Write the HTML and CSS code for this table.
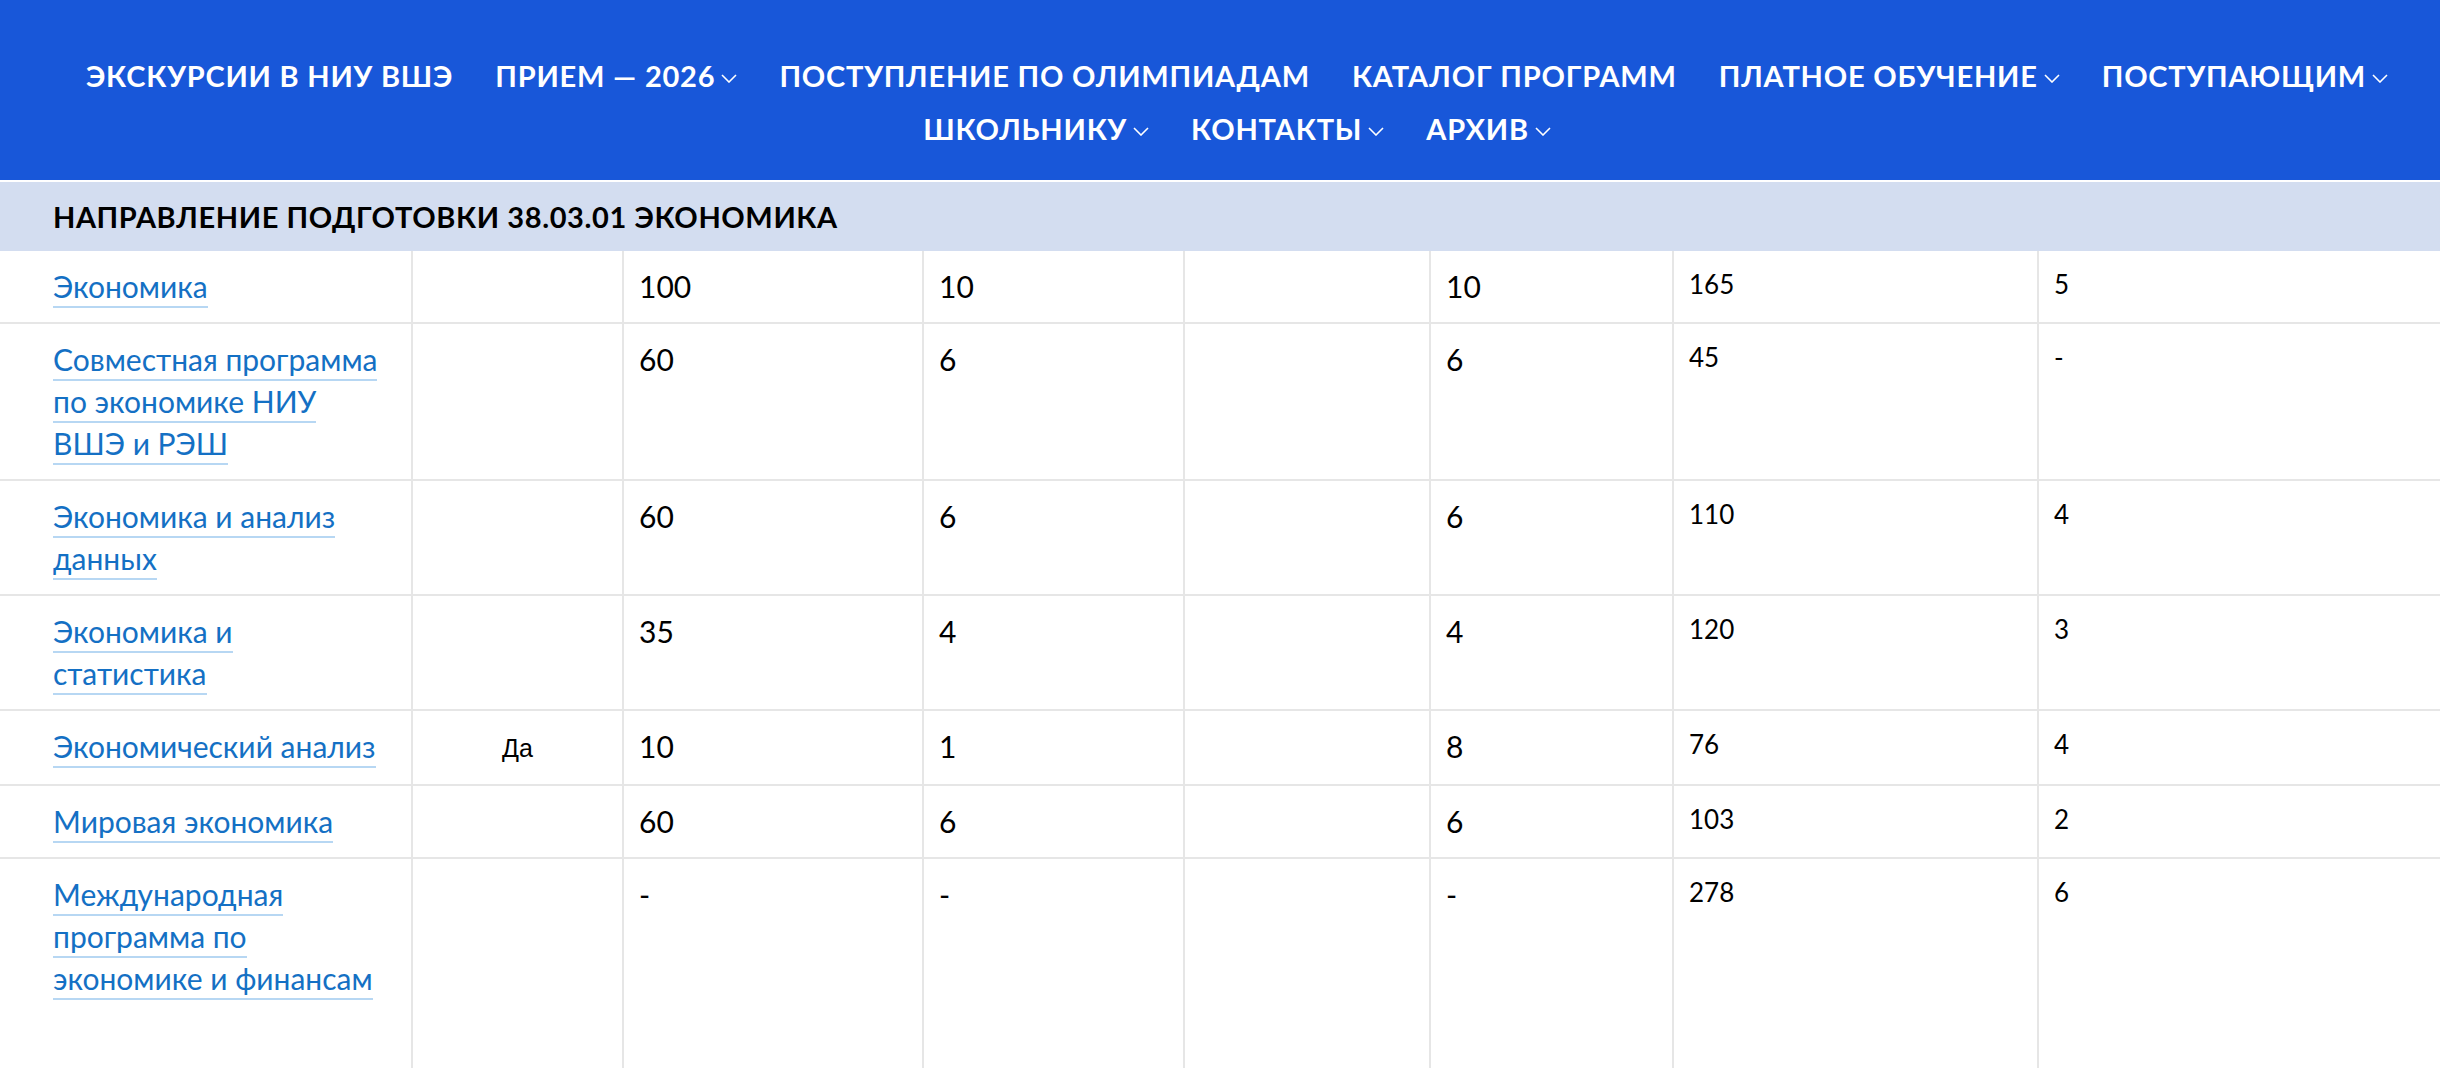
FILE: index.html
```html
<!DOCTYPE html>
<html lang="ru">
<head>
<meta charset="utf-8">
<title>Экономика</title>
<link rel="stylesheet" href="styles.css">
</head>
<body>
<header class="site-header">
  <nav class="main-nav">
    <a class="nav-item" href="#">ЭКСКУРСИИ В НИУ ВШЭ</a>
    <a class="nav-item" href="#">ПРИЕМ — 2026<svg class="chev" viewBox="0 0 16 9"><polyline points="1,1 8,8 15,1"/></svg></a>
    <a class="nav-item" href="#">ПОСТУПЛЕНИЕ ПО ОЛИМПИАДАМ</a>
    <a class="nav-item" href="#">КАТАЛОГ ПРОГРАММ</a>
    <a class="nav-item" href="#">ПЛАТНОЕ ОБУЧЕНИЕ<svg class="chev" viewBox="0 0 16 9"><polyline points="1,1 8,8 15,1"/></svg></a>
    <a class="nav-item" href="#">ПОСТУПАЮЩИМ<svg class="chev" viewBox="0 0 16 9"><polyline points="1,1 8,8 15,1"/></svg></a>
    <a class="nav-item" href="#">ШКОЛЬНИКУ<svg class="chev" viewBox="0 0 16 9"><polyline points="1,1 8,8 15,1"/></svg></a>
    <a class="nav-item" href="#">КОНТАКТЫ<svg class="chev" viewBox="0 0 16 9"><polyline points="1,1 8,8 15,1"/></svg></a>
    <a class="nav-item" href="#">АРХИВ<svg class="chev" viewBox="0 0 16 9"><polyline points="1,1 8,8 15,1"/></svg></a>
  </nav>
</header>

<div class="section-band">
  <h2 class="section-title">НАПРАВЛЕНИЕ ПОДГОТОВКИ 38.03.01 ЭКОНОМИКА</h2>
</div>

<table class="programs">
  <colgroup>
    <col class="w1"><col class="w2"><col class="w3"><col class="w4"><col class="w5"><col class="w6"><col class="w7"><col>
  </colgroup>
  <tbody>
    <tr>
      <td class="name"><a class="prog-link" href="#">Экономика</a></td>
      <td class="yes"></td>
      <td>100</td><td>10</td><td></td><td>10</td>
      <td class="sm">165</td><td class="sm">5</td>
    </tr>
    <tr>
      <td class="name"><a class="prog-link" href="#">Совместная программа<br>по экономике НИУ<br>ВШЭ и РЭШ</a></td>
      <td class="yes"></td>
      <td>60</td><td>6</td><td></td><td>6</td>
      <td class="sm">45</td><td class="sm">-</td>
    </tr>
    <tr>
      <td class="name"><a class="prog-link" href="#">Экономика и анализ<br>данных</a></td>
      <td class="yes"></td>
      <td>60</td><td>6</td><td></td><td>6</td>
      <td class="sm">110</td><td class="sm">4</td>
    </tr>
    <tr>
      <td class="name"><a class="prog-link" href="#">Экономика и<br>статистика</a></td>
      <td class="yes"></td>
      <td>35</td><td>4</td><td></td><td>4</td>
      <td class="sm">120</td><td class="sm">3</td>
    </tr>
    <tr>
      <td class="name"><a class="prog-link" href="#">Экономический анализ</a></td>
      <td class="yes">Да</td>
      <td>10</td><td>1</td><td></td><td>8</td>
      <td class="sm">76</td><td class="sm">4</td>
    </tr>
    <tr>
      <td class="name"><a class="prog-link" href="#">Мировая экономика</a></td>
      <td class="yes"></td>
      <td>60</td><td>6</td><td></td><td>6</td>
      <td class="sm">103</td><td class="sm">2</td>
    </tr>
    <tr class="last">
      <td class="name"><a class="prog-link" href="#">Международная<br>программа по<br>экономике и финансам</a></td>
      <td class="yes"></td>
      <td>-</td><td>-</td><td></td><td>-</td>
      <td class="sm">278</td><td class="sm">6</td>
    </tr>
  </tbody>
</table>
</body>
</html>
```

FILE: styles.css
```css
html, body {
  margin: 0;
  padding: 0;
  background: #ffffff;
  font-family: Lato, "Noto Sans", sans-serif;
  color: #000;
}

.site-header {
  background: #1857d9;
  height: 180px;
  box-sizing: border-box;
  padding: 58px 0 0 34px;
}

.main-nav {
  display: flex;
  flex-wrap: wrap;
  justify-content: center;
  column-gap: 42px;
  row-gap: 17px;
}

.nav-item {
  display: inline-flex;
  align-items: center;
  color: #ffffff;
  font-weight: 700;
  font-size: 29px;
  letter-spacing: 0.8px;
  line-height: 36px;
  text-decoration: none;
  white-space: nowrap;
}

.chev {
  width: 16px;
  height: 9px;
  margin-left: 6px;
  margin-top: 5px;
  fill: none;
  stroke: #ffffff;
  stroke-width: 1.6;
}

.section-band {
  background: #d3ddf0;
  border-top: 2px solid #ffffff;
  padding: 17px 53px 16px;
}

.section-title {
  margin: 0;
  font-size: 29px;
  letter-spacing: 0.6px;
  line-height: 36px;
  font-weight: 700;
  color: #000;
}

.programs {
  width: 100%;
  border-collapse: collapse;
  table-layout: fixed;
}

.w1 { width: 412px; }
.w2 { width: 211px; }
.w3 { width: 300px; }
.w4 { width: 261px; }
.w5 { width: 246px; }
.w6 { width: 243px; }
.w7 { width: 365px; }

.programs td {
  border-right: 2px solid #e6e6e6;
  border-bottom: 2px solid #e6e6e6;
  vertical-align: top;
  padding: 14px 15px 15px;
  font-size: 30px;
  line-height: 42px;
  color: #000;
}

.programs td:last-child {
  border-right: none;
}

.programs td.name {
  padding-left: 53px;
  padding-right: 10px;
  white-space: nowrap;
}

.prog-link {
  color: #1470c4;
  text-decoration: none;
  border-bottom: 2px solid #b7d7f3;
  padding-bottom: 2px;
}

.programs td.yes {
  text-align: center;
  font-family: "Liberation Sans", Arial, sans-serif;
  font-size: 25px;
  padding-top: 16px;
}

.programs td.sm {
  font-size: 26px;
  padding-top: 12px;
}

.programs tr.last td {
  padding-bottom: 140px;
  border-bottom: none;
}
```
